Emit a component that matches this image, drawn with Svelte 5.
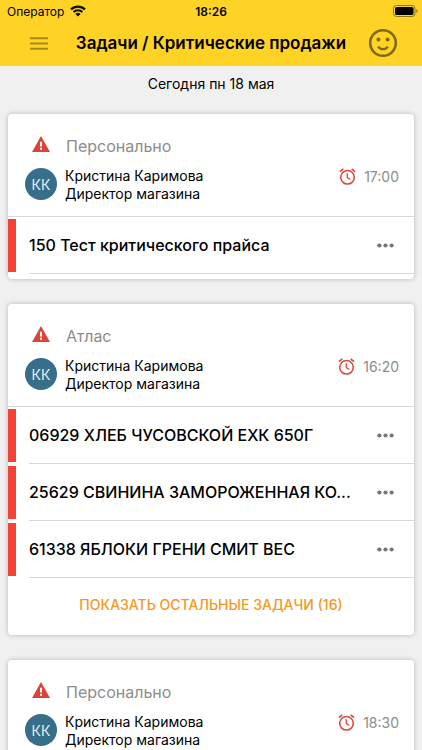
<script>
  const cards = [
    {
      kind: 'Персонально',
      time: '17:00',
      tasks: ['150 Тест критического прайса'],
      rest: 0
    },
    {
      kind: 'Атлас',
      time: '16:20',
      tasks: [
        '06929 ХЛЕБ ЧУСОВСКОЙ ЕХК 650Г',
        '25629 СВИНИНА ЗАМОРОЖЕННАЯ КО...',
        '61338 ЯБЛОКИ ГРЕНИ СМИТ ВЕС'
      ],
      rest: 16
    },
    { kind: 'Персонально', time: '18:30', tasks: [], rest: 0 }
  ];
</script>

<div class="screen">
  <header>
    <div class="status">
      <div class="carrier">
        <span>Оператор</span>
        <svg width="16" height="12" viewBox="0 0 16 12" aria-hidden="true">
          <g fill="none" stroke="#111" stroke-width="2.2">
            <path d="M1 4.4a10 10 0 0 1 14 0" />
            <path d="M3.6 7.1a6.2 6.2 0 0 1 8.8 0" />
          </g>
          <path d="M8 11.6 5.4 9a3.7 3.7 0 0 1 5.2 0z" fill="#111" />
        </svg>
      </div>
      <span class="clock">18:26</span>
      <svg class="battery" width="25" height="12" viewBox="0 0 25 12" aria-hidden="true">
        <rect x=".5" y=".5" width="21.5" height="11" rx="3" fill="none" stroke="#8c7518" />
        <rect x="2" y="2" width="18.5" height="8" rx="1.6" fill="#000" />
        <path d="M23.3 4v4q1.3-.6 1.3-2t-1.3-2z" fill="#8c7518" />
      </svg>
    </div>
    <div class="bar">
      <button class="icon" aria-label="Меню">
        <svg width="18" height="13" viewBox="0 0 18 13">
          <path d="M0 1.2h18M0 6.5h18M0 11.8h18" stroke="#a68a18" stroke-width="1.9" />
        </svg>
      </button>
      <h1>Задачи / Критические продажи</h1>
      <button class="icon" aria-label="Настроение">
        <svg width="30" height="30" viewBox="0 0 30 30">
          <circle cx="15" cy="15" r="12.8" fill="none" stroke="#806a14" stroke-width="2.6" />
          <circle cx="10.4" cy="11.6" r="2" fill="#806a14" />
          <circle cx="19.6" cy="11.6" r="2" fill="#806a14" />
          <path d="M10 18.6q1.8 2.6 5 2.6t5-2.6" fill="none" stroke="#806a14" stroke-width="2.2" />
        </svg>
      </button>
    </div>
  </header>

  <main>
    <h2>Сегодня пн 18 мая</h2>
    {#each cards as card}
      <section>
        <div class="head">
          <div class="kind">
            <svg width="18" height="16" viewBox="0 0 18 16" aria-hidden="true">
              <path d="M9 0 18 16H0z" fill="#db4437" />
              <path d="M8 5.8h2v4.6H8zM8 11.8h2v2H8z" fill="#fff" />
            </svg>
            <span>{card.kind}</span>
          </div>
          <div class="person">
            <span class="avatar">КК</span>
            <p>Кристина Каримова<br />Директор магазина</p>
            <div class="due">
              <svg width="17" height="17" viewBox="0 0 18 18" aria-hidden="true">
                <g fill="none" stroke="#e04a3f" stroke-width="1.7">
                  <circle cx="9" cy="9.8" r="7.2" />
                  <path d="M8.8 5.6v4.6l3.2 2" stroke-width="1.4" />
                  <path d="M1 3.8 4.6.9M17 3.8 13.4.9" stroke-width="1.8" />
                </g>
              </svg>
              <time>{card.time}</time>
            </div>
          </div>
        </div>
        {#if card.tasks.length}
          <ul>
            {#each card.tasks as task}
              <li>
                <div class="task">
                  <span>{task}</span>
                  <button class="icon" aria-label="Действия">
                    <svg width="17" height="5" viewBox="0 0 17 5" fill="#757575">
                      <circle cx="2.4" cy="2.5" r="2.1" />
                      <circle cx="8.5" cy="2.5" r="2.1" />
                      <circle cx="14.6" cy="2.5" r="2.1" />
                    </svg>
                  </button>
                </div>
              </li>
            {/each}
          </ul>
        {/if}
        {#if card.rest}
          <button class="more">ПОКАЗАТЬ ОСТАЛЬНЫЕ ЗАДАЧИ ({card.rest})</button>
        {:else}
          <div class="foot"></div>
        {/if}
      </section>
    {/each}
  </main>
</div>

<style>
  :global(body) {
    background: #f0f0f0;
  }
  .screen {
    height: 100vh;
    display: flex;
    flex-direction: column;
    overflow: hidden;
    font-family: Inter, 'Liberation Sans', sans-serif;
    color: #000;
    background: #f0f0f0;
  }
  button {
    border: 0;
    background: none;
    font: inherit;
    cursor: pointer;
  }
  svg {
    display: block;
    flex: none;
  }
  h1,
  h2,
  p,
  ul {
    margin: 0;
    padding: 0;
  }
  header {
    flex: none;
    background: #ffd226;
  }
  .status {
    display: grid;
    grid-template-columns: 1fr auto 1fr;
    align-items: center;
    height: 22px;
    padding: 0 7px;
    font-size: 12px;
  }
  .carrier {
    display: flex;
    align-items: center;
    gap: 6px;
  }
  .clock {
    font-weight: 600;
  }
  .battery {
    justify-self: end;
    margin-right: -3px;
  }
  .bar {
    display: flex;
    align-items: center;
    height: 42px;
    padding: 0 24px 2px 30px;
  }
  .icon {
    display: flex;
    padding: 0;
  }
  h1 {
    flex: 1;
    padding-left: 6px;
    text-align: center;
    font-size: 17px;
    font-weight: 600;
    white-space: nowrap;
  }
  main {
    flex: 1;
    min-height: 0;
    overflow: hidden;
    padding: 0 8px;
  }
  h2 {
    padding: 8px 0 20px;
    font-size: 14px;
    line-height: 20px;
    font-weight: 400;
    text-align: center;
  }
  section {
    margin-bottom: 25px;
    border-radius: 4px;
    background: #fff;
    box-shadow: 0 0 5px rgba(0, 0, 0, 0.24);
  }
  .head {
    height: 102px;
    box-sizing: border-box;
    padding: 21px 15px 0 17px;
  }
  .kind {
    display: flex;
    align-items: center;
    gap: 16px;
    height: 22px;
    padding-left: 7px;
    font-size: 16px;
    color: #8c8c8c;
  }
  .kind svg {
    margin-bottom: 4px;
  }
  .person {
    display: flex;
    align-items: flex-start;
    gap: 8px;
    padding-top: 10px;
  }
  .avatar {
    display: flex;
    align-items: center;
    justify-content: center;
    flex: none;
    width: 32px;
    height: 32px;
    margin-top: 1px;
    border-radius: 50%;
    background: #376e89;
    color: #e4edf1;
    font-size: 14px;
  }
  p {
    flex: 1;
    font-size: 14px;
    line-height: 18px;
  }
  .due {
    display: flex;
    align-items: center;
    gap: 8px;
    height: 18px;
    font-size: 14px;
    color: #8c8c8c;
  }
  ul {
    list-style: none;
    border-top: 1px solid #d8d8d8;
  }
  li {
    display: flex;
    height: 57px;
  }
  li::before {
    content: '';
    flex: none;
    width: 8px;
    margin: 2px 13px 2px 0;
    background: #f44336;
  }
  .task {
    flex: 1;
    min-width: 0;
    display: flex;
    align-items: center;
    justify-content: space-between;
    gap: 20px;
    padding-right: 20px;
    border-bottom: 1px solid #d8d8d8;
    font-size: 16px;
    font-weight: 500;
  }
  .task span {
    white-space: nowrap;
    line-height: 24px;
  }
  .foot {
    height: 5px;
  }
  .more {
    display: block;
    width: 100%;
    height: 57px;
    padding: 0 0 4px;
    font-size: 14px;
    font-weight: 500;
    color: #f5991d;
    text-align: center;
  }
</style>
